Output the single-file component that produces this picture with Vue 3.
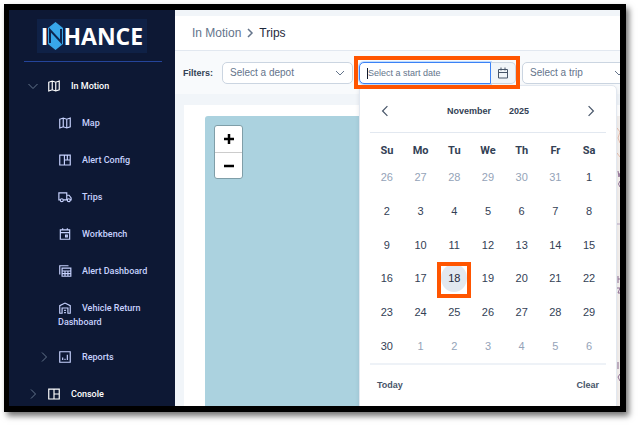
<script setup>
import { ref } from 'vue'

const depot = ref('')
const trip = ref('')
const startDate = ref('')

const weekdays = ['Su', 'Mo', 'Tu', 'We', 'Th', 'Fr', 'Sa']
const weeks = Array.from({ length: 6 }, (_, w) =>
  Array.from({ length: 7 }, (_, d) => {
    const n = w * 7 + d - 5
    if (n < 1) return { label: n + 31, outside: true }
    if (n > 30) return { label: n - 30, outside: true }
    return { label: n, today: n === 18 }
  })
)

const icons = {
  map: 'M3 5.5 9 3.500l6 2 6-2v15l-6 2-6-2-6 2zM9 3.500v15M15 5.500v15',
  layout: 'M3 3.500h18v17H3zM11 3.500v17M11 12h10M16 4v8',
  console: 'M3 3.500h18v17H3zM12 3.500v17M12 12h9',
  truck: 'M4 17H1.500V5H15v12H9M15 9h4l3.500 4.500V17H21M15 17h1M4 17.500a2.500 2.500 0 1 0 5 0a2.500 2.500 0 1 0-5 0M16 17.500a2.500 2.500 0 1 0 5 0a2.500 2.500 0 1 0-5 0',
  calendar: 'M4 5h16v16H4zM4 9.500h16M8 2v3M16 2v3M13 14h3v3h-3z',
  tables: 'M3 18V3h15M7 7h15v14H7zM7 12h15M7 16.500h15M12 12v9M17 12v9',
  garage: 'M3 21V8l9-4.500L21 8v13h-4v-9H7v9zM10.500 16h3M10.500 20h3',
  report: 'M3 3h18v18H3zM8 17v-4M12 17v-2M16 17V8'
}

const items = [
  { label: 'In Motion', icon: 'map', top: true, arrow: 'down' },
  { label: 'Map', icon: 'map' },
  { label: 'Alert Config', icon: 'layout' },
  { label: 'Trips', icon: 'truck' },
  { label: 'Workbench', icon: 'calendar' },
  { label: 'Alert Dashboard', icon: 'tables' },
  { label: 'Vehicle Return Dashboard', icon: 'garage', wrapped: true },
  { label: 'Reports', icon: 'report', arrow: 'right' },
  { label: 'Console', icon: 'console', top: true, arrow: 'right' }
]
</script>

<template>
  <div class="page">
    <div class="frame">
      <aside class="sidebar">
        <div class="brand" role="img" aria-label="INHANCE">
          <span>I</span>
          <svg class="brand-n" viewBox="0 0 15 28">
            <path d="M0 6 7.500 0 15 6v16l-7.500 6L0 22z" fill="#38a7ea" />
            <path d="M2 21V8l11 12V7" fill="none" stroke="#0e2650" stroke-width="2" />
          </svg>
          <span>HANCE</span>
        </div>
        <nav class="nav">
          <a
            v-for="item in items"
            :key="item.label"
            href="#"
            class="nav-item"
            :class="{ 'nav-item--top': item.top, 'nav-item--wrapped': item.wrapped }"
          >
            <span class="nav-arrow">
              <svg v-if="item.arrow" viewBox="0 0 10 10">
                <path :d="item.arrow === 'down' ? 'M.500 3 5 7.500 9.500 3' : 'M3 .500 7.500 5 3 9.500'" />
              </svg>
            </span>
            <span class="nav-label">
              <svg class="nav-icon" viewBox="0 0 24 24"><path :d="icons[item.icon]" /></svg>{{ item.label }}
            </span>
          </a>
        </nav>
      </aside>

      <main class="main">
        <header class="crumbs">
          <a href="#">In Motion</a>
          <svg viewBox="0 0 8 10"><path d="M2 1l4 4-4 4" /></svg>
          <span class="crumb-current">Trips</span>
        </header>

        <div class="filters">
          <span class="filters-label">Filters:</span>
          <div class="select">
            <select v-model="depot" aria-label="Depot">
              <option value="">Select a depot</option>
            </select>
            <svg viewBox="0 0 10 6"><path d="M1 1l4 4 4-4" /></svg>
          </div>

          <div class="date">
            <input v-model="startDate" type="text" placeholder="Select a start date" aria-label="Start date" />
            <button type="button" aria-label="Choose date">
              <svg viewBox="0 0 12 12"><path d="M1.500 2.500h9v8.500h-9zM1.500 5.500h9M4 .500v3M8 .500v3" /></svg>
            </button>
            <span class="caret"></span>
            <div class="picker">
              <div class="picker-head">
                <button type="button" aria-label="Previous month">
                  <svg viewBox="0 0 8 10"><path d="M6 1 2 5l4 4" /></svg>
                </button>
                <div class="picker-title">
                  <button type="button">November</button>
                  <button type="button">2025</button>
                </div>
                <button type="button" aria-label="Next month">
                  <svg viewBox="0 0 8 10"><path d="M2 1l4 4-4 4" /></svg>
                </button>
              </div>
              <table class="days">
                <thead>
                  <tr><th v-for="d in weekdays" :key="d" scope="col">{{ d }}</th></tr>
                </thead>
                <tbody>
                  <tr v-for="(week, i) in weeks" :key="i">
                    <td v-for="day in week" :key="day.label" :class="{ outside: day.outside }">
                      <span class="day" :class="{ 'day--today': day.today }">{{ day.label }}</span>
                    </td>
                  </tr>
                </tbody>
              </table>
              <div class="picker-foot">
                <button type="button">Today</button>
                <button type="button">Clear</button>
              </div>
            </div>
          </div>

          <div class="select select--narrow">
            <select v-model="trip" aria-label="Trip">
              <option value="">Select a trip</option>
            </select>
            <svg viewBox="0 0 10 6"><path d="M1 1l4 4 4-4" /></svg>
          </div>
        </div>

        <section class="card">
          <div class="map">
            <div class="zoom">
              <button type="button" aria-label="Zoom in">
                <svg viewBox="0 0 10 10"><path d="M5 0v10M0 5h10" /></svg>
              </button>
              <button type="button" aria-label="Zoom out">
                <svg viewBox="0 0 10 10"><path d="M0 5h10" /></svg>
              </button>
            </div>
            <svg class="land" viewBox="0 0 6 290">
              <path d="M0 0h6v290H0z" fill="#f5f1ee" />
              <path d="M3 12l3 4-2 6 2 5M3 37l3 4" stroke="#e8bfae" fill="none" />
              <path d="M4 55l1 6 1-4M6 65q-3 3 0 6M4 160v7M4 163h2M3 172h3l-2 5h2M4 246v7M6 258l-2 3 2 4" stroke="#927296" fill="none" />
              <path d="M3 108h3" stroke="#b9a6c4" />
            </svg>
          </div>
        </section>
      </main>
    </div>
  </div>
</template>

<style>
body {
  background: #fff;
}
</style>

<style scoped>
* {
  box-sizing: border-box;
}
.page {
  display: flex;
  min-height: 100vh;
  padding: 4px 13px 13px 4px;
  font-family: "Liberation Sans", Arial, sans-serif;
  color: #334155;
}
.frame {
  flex: 1;
  min-width: 0;
  display: flex;
  overflow: hidden;
  border: 6px solid #000;
  border-left-width: 5px;
  box-shadow: 3px 4px 6px rgba(0, 0, 0, 0.55);
}
svg {
  display: block;
  fill: none;
  stroke: currentColor;
}
button {
  padding: 0;
  border: 0;
  background: none;
  font: inherit;
  color: inherit;
}
a {
  color: inherit;
  text-decoration: none;
}

/* Sidebar */
.sidebar {
  flex: 0 0 166px;
  background: #0d1834;
  color: #c7d2fe;
}
.brand {
  display: flex;
  align-items: center;
  justify-content: center;
  height: 34px;
  margin: 9px 28px 8px;
  background: #0f2146;
  color: #fff;
  font: 700 23px/32px "Open Sans", sans-serif;
}
.brand-n {
  flex: none;
  width: 15px;
  height: 28px;
  stroke: none;
}
.nav {
  margin: 0 13px 0 15px;
  padding-top: 6px;
  border-top: 1px solid #24449a;
}
.nav-item {
  display: flex;
  padding: 11px 0 12px 15px;
  font: 500 9px/14px Roboto, sans-serif;
}
.nav-item--top {
  padding-left: 4px;
  color: #fff;
}
.nav-item--wrapped {
  padding-bottom: 10px;
}
.nav-item:last-child {
  padding-bottom: 4px;
}
.nav-arrow {
  flex: none;
  width: 10px;
  margin-right: 9px;
  padding-top: 2px;
  color: #64748b;
}
.nav-label {
  min-width: 0;
}
.nav-icon {
  display: inline-block;
  width: 14px;
  height: 14px;
  margin-right: 10px;
  vertical-align: top;
  stroke-width: 2;
}

/* Main column */
.main {
  flex: 1;
  min-width: 0;
  display: flex;
  flex-direction: column;
  padding-top: 6px;
  background: #f1f5f9;
}
.crumbs {
  display: flex;
  align-items: center;
  gap: 5px;
  height: 35px;
  padding-left: 17px;
  border-bottom: 1px solid #e2e8f0;
  background: #fff;
  font-size: 12px;
  color: #64748b;
}
.crumbs svg {
  width: 8px;
  height: 10px;
  stroke-width: 1.500;
}
.crumb-current {
  color: #1e293b;
}
.filters {
  display: flex;
  align-items: center;
  gap: 6px;
  height: 43px;
  padding-left: 8px;
  background: #f8fafc;
}
.filters-label {
  flex: none;
  width: 33px;
  font: 700 9px/14px "Liberation Sans", Arial, sans-serif;
}
.select {
  position: relative;
  flex: 0 0 131px;
}
.select--narrow {
  flex-basis: 110px;
}
.select select {
  display: block;
  width: 100%;
  height: 22px;
  padding: 0 24px 0 7px;
  appearance: none;
  border: 1px solid #cbd5e1;
  border-radius: 5px;
  background: #fff;
  font: 10px/20px "Liberation Sans", Arial, sans-serif;
  color: #64748b;
}
.select svg {
  position: absolute;
  right: 8px;
  top: 8px;
  width: 10px;
  height: 6px;
  pointer-events: none;
  color: #64748b;
}
.date {
  position: relative;
  flex: 0 0 157px;
  min-width: 0;
  display: flex;
  height: 22px;
  z-index: 2;
}
.date::after {
  content: "";
  position: absolute;
  inset: -6px -4px -5px -5px;
  border: 4px solid #ff5500;
  pointer-events: none;
}
.date > input {
  flex: 1;
  width: 0;
  min-width: 0;
  padding: 0 8px;
  border: 1px solid #3b82f6;
  border-radius: 5px 0 0 5px;
  outline: 0;
  background: #fff;
  box-shadow: 0 0 0 1px #bfdbfe;
  font: 9px/20px "Liberation Sans", Arial, sans-serif;
  color: #334155;
}
.date > input::placeholder {
  color: #64748b;
  opacity: 1;
}
.date > button {
  flex: none;
  display: grid;
  place-items: center;
  width: 25px;
  border: 1px solid #cbd5e1;
  border-left: 0;
  border-radius: 0 5px 5px 0;
  background: #f1f5f9;
  color: #475569;
}
.date > button svg {
  width: 12px;
  height: 12px;
}
.caret {
  position: absolute;
  left: 8px;
  top: 6px;
  width: 1px;
  height: 11px;
  background: #0f172a;
}

/* Calendar overlay */
.picker {
  position: absolute;
  top: 23px;
  left: 0;
  width: 258px;
  padding: 4px 10px 12px;
  border: 1px solid #e2e8f0;
  border-radius: 5px;
  background: #fff;
  box-shadow: 0 2px 4px rgba(15, 23, 42, 0.1);
  font-size: 10px;
}
.picker-head,
.picker-foot {
  display: flex;
  align-items: center;
  justify-content: space-between;
}
.picker-head {
  height: 43px;
  padding: 0 10px;
  border-bottom: 1px solid #e2e8f0;
}
.picker-head svg {
  width: 10px;
  height: 12px;
  color: #475569;
}
.picker-title {
  display: flex;
  gap: 18px;
  font-size: 9px;
  font-weight: 700;
}
.days {
  width: 100%;
  height: 222px;
  margin-top: 8px;
  table-layout: fixed;
  border-collapse: collapse;
  font: 11px/14px "Liberation Sans", Arial, sans-serif;
  text-align: center;
}
.days th {
  height: 20px;
  padding: 0;
  font: 700 11px/14px Roboto, sans-serif;
}
.days td {
  padding: 0;
  color: #334155;
}
.days .outside {
  color: #94a3b8;
}
.day {
  position: relative;
  display: block;
  width: 26px;
  margin: auto;
  border-radius: 50%;
  line-height: 28px;
}
.day--today {
  background: #e2e8f0;
  color: #1e293b;
}
.day--today::after {
  content: "";
  position: absolute;
  inset: -2px -4px -6px;
  border: 4px solid #ff5500;
}
.picker-foot {
  height: 42px;
  padding: 0 7px;
  border-top: 2px solid #eef2f7;
  font-size: 9px;
  font-weight: 700;
  color: #475569;
}

/* Map */
.card {
  flex: 1;
  display: flex;
  margin: 11px 0 0 9px;
  padding: 11px 0 0 21px;
  background: #fff;
}
.map {
  position: relative;
  flex: 1;
  overflow: hidden;
  padding: 9px;
  border-radius: 3px 0 0;
  background: #abd2df;
}
.zoom {
  width: 29px;
  border: 1px solid #7f9ea8;
  border-radius: 3px;
  background: #fff;
  color: #000;
}
.zoom button {
  display: grid;
  place-items: center;
  width: 100%;
  height: 26px;
}
.zoom button + button {
  border-top: 1px solid #ccc;
}
.zoom svg {
  width: 10px;
  height: 10px;
  stroke-width: 2.500;
}
.land {
  position: absolute;
  top: 0;
  right: 0;
  width: 6px;
  height: 290px;
  stroke: none;
}
</style>
